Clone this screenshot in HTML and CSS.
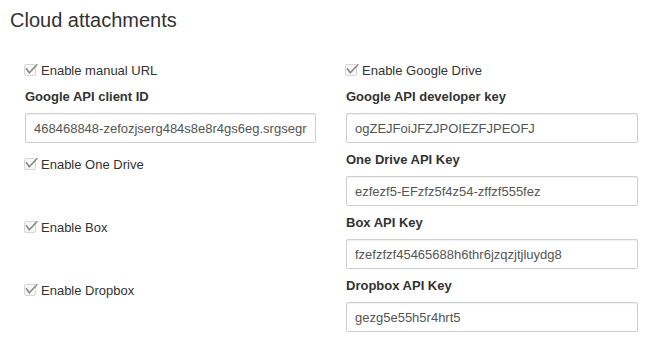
FILE: index.html
```html
<!DOCTYPE html>
<html>
<head>
<meta charset="utf-8">
<link rel="stylesheet" href="styles.css">
</head>
<body>
<div class="page">
  <h2 class="title">Cloud attachments</h2>
  <div class="cols">
    <div class="col">
      <label class="check"><svg class="cb" width="14" height="13" viewBox="0 0 14 13"><rect x="0.5" y="1.5" width="11" height="11" rx="1.5" fill="#f7f7f7" stroke="#d6d6d6"/><path d="M2 5.3 L5.3 9.7 L13.3 1.3" fill="none" stroke="#8a8a8a" stroke-width="1.6"/></svg>Enable manual URL</label>
      <div class="group">
        <div class="lbl">Google API client ID</div>
        <input class="field" type="text" value="468468848-zefozjserg484s8e8r4gs6eg.srgsegrgerg">
      </div>
      <div class="group check-group">
        <label class="check"><svg class="cb" width="14" height="13" viewBox="0 0 14 13"><rect x="0.5" y="1.5" width="11" height="11" rx="1.5" fill="#f7f7f7" stroke="#d6d6d6"/><path d="M2 5.3 L5.3 9.7 L13.3 1.3" fill="none" stroke="#8a8a8a" stroke-width="1.6"/></svg>Enable One Drive</label>
      </div>
      <div class="group check-group">
        <label class="check"><svg class="cb" width="14" height="13" viewBox="0 0 14 13"><rect x="0.5" y="1.5" width="11" height="11" rx="1.5" fill="#f7f7f7" stroke="#d6d6d6"/><path d="M2 5.3 L5.3 9.7 L13.3 1.3" fill="none" stroke="#8a8a8a" stroke-width="1.6"/></svg>Enable Box</label>
      </div>
      <div class="group check-group">
        <label class="check"><svg class="cb" width="14" height="13" viewBox="0 0 14 13"><rect x="0.5" y="1.5" width="11" height="11" rx="1.5" fill="#f7f7f7" stroke="#d6d6d6"/><path d="M2 5.3 L5.3 9.7 L13.3 1.3" fill="none" stroke="#8a8a8a" stroke-width="1.6"/></svg>Enable Dropbox</label>
      </div>
    </div>
    <div class="col">
      <label class="check"><svg class="cb" width="14" height="13" viewBox="0 0 14 13"><rect x="0.5" y="1.5" width="11" height="11" rx="1.5" fill="#f7f7f7" stroke="#d6d6d6"/><path d="M2 5.3 L5.3 9.7 L13.3 1.3" fill="none" stroke="#8a8a8a" stroke-width="1.6"/></svg>Enable Google Drive</label>
      <div class="group">
        <div class="lbl">Google API developer key</div>
        <input class="field" type="text" value="ogZEJFoiJFZJPOIEZFJPEOFJ">
      </div>
      <div class="group">
        <div class="lbl">One Drive API Key</div>
        <input class="field" type="text" value="ezfezf5-EFzfz5f4z54-zffzf555fez">
      </div>
      <div class="group">
        <div class="lbl">Box API Key</div>
        <input class="field" type="text" value="fzefzfzf45465688h6thr6jzqzjtjluydg8">
      </div>
      <div class="group">
        <div class="lbl">Dropbox API Key</div>
        <input class="field" type="text" value="gezg5e55h5r4hrt5">
      </div>
    </div>
  </div>
</div>
</body>
</html>
```
FILE: styles.css
```css
html, body {
  margin: 0;
  padding: 0;
  background: #fff;
}
body {
  font-family: "Liberation Sans", Arial, sans-serif;
  font-size: 13px;
  color: #333;
}
.page {
  padding: 9px 10px 0 10px;
}
.title {
  margin: 0;
  font-size: 20px;
  line-height: 22px;
  font-weight: normal;
  color: #333;
}
.cols {
  display: grid;
  grid-template-columns: 291px 292px;
  column-gap: 30px;
  margin: 30px 0 0 15px;
}
.col {
  display: flex;
  flex-direction: column;
}
.check {
  display: flex;
  align-items: center;
  height: 19px;
  line-height: 19px;
  margin-bottom: 7px;
  color: #333;
}
.cb {
  display: block;
  margin: -2px 3px 0 -1px;
  flex: none;
}
.group {
  display: flex;
  flex-direction: column;
  height: 56px;
  margin-bottom: 7px;
}
.check-group {
  padding-top: 5px;
  box-sizing: border-box;
}
.lbl {
  font-weight: bold;
  line-height: 19px;
  margin-bottom: 7px;
  color: #333;
}
.field {
  box-sizing: border-box;
  width: 100%;
  height: 30px;
  margin: 0;
  padding: 0 8px;
  border: 1px solid #cfcfcf;
  border-radius: 2px;
  box-shadow: inset 0 1px 1px rgba(0,0,0,0.06);
  font-family: "Liberation Sans", Arial, sans-serif;
  font-size: 13px;
  color: #555;
  background: #fff;
  outline: none;
}
```
